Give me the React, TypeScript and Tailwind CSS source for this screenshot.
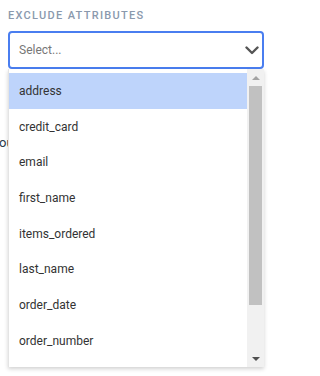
const options = [
  "address",
  "credit_card",
  "email",
  "first_name",
  "items_ordered",
  "last_name",
  "order_date",
  "order_number",
];

function Chevron() {
  return (
    <svg width="14" height="14" viewBox="0 0 14 14" fill="none">
      <path d="M1.5 4.5 7 10l5.5-5.5" stroke="#555" strokeWidth="2.4" strokeLinecap="round" strokeLinejoin="round" />
    </svg>
  );
}

function ScrollBar() {
  return (
    <div className="flex w-[17px] flex-col bg-[#f1f1f1]">
      <div className="flex h-[17px] items-center justify-center">
        <div className="h-0 w-0 border-x-[4px] border-b-[4px] border-x-transparent border-b-[#a3a3a3]" />
      </div>
      <div className="mx-[2px] h-[219px] bg-[#c1c1c1]" />
      <div className="flex-1" />
      <div className="flex h-[17px] items-center justify-center">
        <div className="h-0 w-0 border-x-[4px] border-t-[4px] border-x-transparent border-t-[#505050]" />
      </div>
    </div>
  );
}

export default function App() {
  return (
    <div className="relative h-[376px] w-[272px] overflow-hidden bg-white font-['Roboto',sans-serif]">
      <div className="px-2 pt-2">
        <div className="mb-[7px] text-[11px] leading-4 font-medium tracking-[1.3px] text-[#8a99ad] uppercase">
          Exclude Attributes
        </div>
        <div className="relative">
          <div className="flex h-[38px] items-center justify-between rounded-[4px] border-2 border-[#4a7ef0] pr-[3px] pl-[9px]">
            <span className="text-[12px] text-[#777]">Select...</span>
            <Chevron />
          </div>
          <div className="absolute top-full right-0 left-0 z-10 flex h-[298px] border-l border-[#e4e4e4] bg-white shadow-[0_2px_4px_rgba(0,0,0,0.18)]">
            <div className="flex-1 overflow-hidden pt-1">
              {options.map((o, i) => (
                <div
                  key={o}
                  className={`flex h-[35.7px] items-center pl-[10px] text-[12px] text-[#333] ${i === 0 ? "bg-[#bed4fb]" : ""}`}
                >
                  {o}
                </div>
              ))}
            </div>
            <ScrollBar />
          </div>
        </div>
        <div className="-ml-[9px] mt-[66px] text-[13px] leading-4 text-[#2d3a4a]">ou want to leave out</div>
      </div>
    </div>
  );
}
